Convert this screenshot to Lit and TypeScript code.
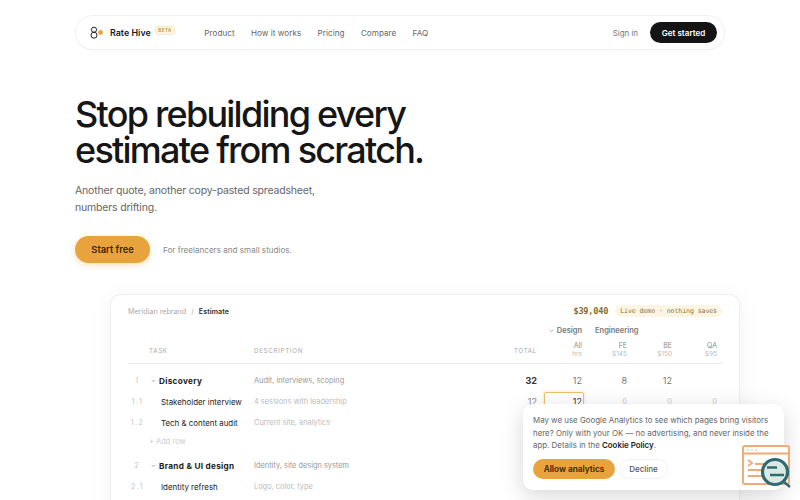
import { LitElement, html, css } from "lit";
import { customElement } from "lit/decorators.js";

type Row = { kind: "group" | "item" | "add"; n?: string; task?: string; desc?: string; total?: string; vals?: string[]; h: number };

const rows: Row[] = [
  { kind: "group", n: "1", task: "Discovery", desc: "Audit, interviews, scoping", total: "32", vals: ["12", "8", "12", ""], h: 21 },
  { kind: "item", n: "1.1", task: "Stakeholder interview", desc: "4 sessions with leadership", total: "12", vals: ["12", "0", "0", "0"], h: 21 },
  { kind: "item", n: "1.2", task: "Tech & content audit", desc: "Current site, analytics", total: "", vals: ["", "", "", ""], h: 21 },
  { kind: "add", task: "+ Add row", h: 22 },
  { kind: "group", n: "2", task: "Brand & UI design", desc: "Identity, site design system", total: "", vals: ["", "", "", ""], h: 21 },
  { kind: "item", n: "2.1", task: "Identity refresh", desc: "Logo, color, type", total: "", vals: ["", "", "", ""], h: 21 },
];

@customElement("app-root")
export class AppRoot extends LitElement {
  static styles = css`
    :host { display: block; width: 800px; height: 500px; overflow: hidden; position: relative; background: #fff;
      font-family: Inter, "Liberation Sans", sans-serif; color: #1a1a1a; }
    .page { padding: 15px 75px 0; }
    .nav { height: 35px; box-sizing: border-box; border: 1px solid #f1f1ef; border-radius: 18px; display: flex; align-items: center;
      padding: 0 7px 0 14px; box-shadow: 0 1px 3px rgba(0,0,0,.03); }
    .logo { width: 14px; height: 13px; display: block; }
    .brand { font-size: 8.8px; font-weight: 600; margin-left: 6px; letter-spacing: .05px; white-space: nowrap; }
    .beta { font-size: 4.6px; letter-spacing: .5px; color: #b98a30; background: #fdf6e8; border: 1px solid #f5e7cb; border-radius: 3px;
      padding: 1px 2.5px; margin-left: 4px; margin-top: -4px; font-weight: 500; }
    .links { display: flex; gap: 16.3px; margin-left: 29px; font-size: 8.1px; color: #666; letter-spacing: .05px; }
    .spacer { flex: 1; }
    .signin { font-size: 7.9px; color: #777; margin-right: 12px; }
    .cta { background: #141414; color: #fff; font-size: 8.1px; font-weight: 600; border-radius: 11px; height: 21px; width: 67px;
      display: flex; align-items: center; justify-content: center; }

    h1 { margin: 46px 0 0; font-size: 36px; line-height: 36px; font-weight: 500; letter-spacing: -1.75px; color: #161616; }
    .sub { margin: 14px 0 0; font-size: 10.5px; line-height: 17px; color: #666; letter-spacing: -.18px; }
    .actions { display: flex; align-items: center; margin-top: 20px; }
    .start { width: 75px; height: 27px; border-radius: 14px; background: #e8a33d; color: #3a2208; font-size: 9.3px; font-weight: 600;
      display: flex; align-items: center; justify-content: center; box-shadow: 0 2px 6px rgba(232,163,61,.35); }
    .note { margin-left: 13px; font-size: 8.1px; color: #888; }

    .card { margin: 31px -15px 0 35px; height: 260px; box-sizing: border-box; border: 1px solid #eeeeec; border-radius: 10px;
      padding: 10px 17px 0; background: #fff; box-shadow: 0 4px 24px rgba(0,0,0,.05); }
    .top { display: flex; align-items: center; height: 12px; font-size: 7.2px; color: #aaa; }
    .top .sep { margin: 0 5px; }
    .top b { color: #333; font-weight: 600; }
    .price { font-family: "DejaVu Sans Mono", monospace; font-size: 8.6px; font-weight: 700; color: #8a6a24; margin-right: 7px; letter-spacing: -.2px; }
    .live { font-family: "DejaVu Sans Mono", monospace; font-size: 6.6px; color: #8c7236; background: #fdf5e4; border-radius: 6px;
      padding: 2px 5px; letter-spacing: -.1px; }

    .grid { display: grid; grid-template-columns: 21px 105px 228px 55px 45px 45px 45px 45px; width: 594px; align-items: center; }
    .groups { height: 13px; margin-top: 7px; font-size: 7.5px; font-weight: 600; color: #777; }
    .groups .design { grid-column: 5; text-align: right; white-space: nowrap; }
    .groups .eng { grid-column: 6 / span 2; padding-left: 13px; white-space: nowrap; }
    .chev { display: inline-block; width: 8px; vertical-align: middle; margin-right: 0; }
    .chev svg { display: block; width: 5px; height: 4px; }
    .head { height: 26px; border-bottom: 1px solid #ececea; font-size: 6.2px; color: #aaa; letter-spacing: .7px; }
    .head .r { text-align: right; }
    .head .col { text-align: right; font-size: 7px; letter-spacing: 0; line-height: 9px; color: #888; }
    .head .col small { display: block; font-size: 6.5px; color: #bbb; }
    .body { margin-top: 6px; }
    .row { font-size: 8px; color: #999; }
    .row .n { font-size: 7px; color: #c4c4c4; text-align: center; letter-spacing: 1.5px; padding-right: 2px; white-space: nowrap; }
    .row .task { white-space: nowrap; overflow: hidden; color: #222; font-size: 7.9px; padding-left: 12px; }
    .row .num { text-align: right; }
    .row .zero { color: #ccc; font-size: 7.5px; }
    .row .d { color: #bbb; font-size: 7.4px; }
    .row .tot { text-align: right; color: #888; font-size: 9px; }
    .row.group .task { font-size: 8.2px; font-weight: 700; letter-spacing: .3px; padding-left: 2px; overflow: visible; }
    .row.group .d { color: #999; }
    .row.group .tot { font-weight: 700; color: #333; }
    .row.group .num { color: #777; font-size: 9px; }
    .add { color: #ccc; font-size: 7.5px; grid-column: 2 / span 2; }
    .sel { position: relative; color: #333; font-size: 9px; }
    .sel::before { content: ""; position: absolute; left: 7px; right: -2px; top: -4px; bottom: -8px; border: 1.5px solid #e8c06f; border-radius: 2px; box-shadow: 0 0 0 2px #fdf6e8; }

    .cookie { position: absolute; left: 523px; top: 404px; width: 261px; height: 86px; box-sizing: border-box; background: #fff; border-radius: 10px;
      padding: 10px 8px 9px 10px; box-shadow: 0 6px 22px rgba(0,0,0,.16); }
    .cookie p { margin: 0; font-size: 7.9px; line-height: 12.6px; color: #666; }
    .cookie p b { color: #222; font-weight: 600; }
    .btns { display: flex; gap: 4px; margin-top: 7px; align-items: center; }
    .allow { width: 82px; height: 20px; border-radius: 10px; background: #e8a33d; color: #3a2208; font-size: 8.3px; font-weight: 600;
      display: flex; align-items: center; justify-content: center; }
    .decline { width: 49px; height: 20px; border-radius: 10px; border: 1px solid #f2f2f0; color: #555; font-size: 8px; font-weight: 500;
      display: flex; align-items: center; justify-content: center; box-sizing: border-box; }
    .chat { position: absolute; left: 742px; top: 445px; width: 50px; height: 45px; }
  `;

  private chevron() {
    return html`<span class="chev"><svg viewBox="0 0 5 4" fill="none"><path d="M.8 1l1.7 1.7L4.2 1" stroke="#999" stroke-width=".8"/></svg></span>`;
  }

  private renderRow(r: Row) {
    if (r.kind === "add") {
      return html`<div class="grid row" style="height:${r.h - 6}px"><span></span><span class="add">${r.task}</span></div><div style="height:6px"></div>`;
    }
    return html`<div class="grid row ${r.kind}" style="height:${r.h}px">
      <span class="n">${r.n}</span>
      <span class="task">${r.kind === "group" ? this.chevron() : ""}${r.task}</span>
      <span class="d">${r.desc}</span>
      <span class="tot">${r.total}</span>
      ${r.vals!.map((v, i) => html`<span class="num ${v === "0" ? "zero" : ""} ${r.n === "1.1" && i === 0 ? "sel" : ""}">${v}</span>`)}
    </div>`;
  }

  render() {
    return html`
      <div class="page">
        <header class="nav">
          <svg class="logo" viewBox="0 0 14 13" fill="none">
            <circle cx="4" cy="3.7" r="2.6" stroke="#222" stroke-width="1"/>
            <circle cx="4" cy="9.2" r="3" stroke="#222" stroke-width="1"/>
            <circle cx="10.5" cy="6.5" r="2.4" fill="#e8a33d"/>
          </svg>
          <span class="brand">Rate Hive</span>
          <span class="beta">BETA</span>
          <nav class="links"><span>Product</span><span>How it works</span><span>Pricing</span><span>Compare</span><span>FAQ</span></nav>
          <span class="spacer"></span>
          <span class="signin">Sign in</span>
          <span class="cta">Get started</span>
        </header>

        <h1>Stop rebuilding every<br />estimate from scratch.</h1>
        <p class="sub">Another quote, another copy-pasted spreadsheet,<br />numbers drifting.</p>
        <div class="actions"><span class="start">Start free</span><span class="note">For freelancers and small studios.</span></div>

        <section class="card">
          <div class="top">
            <span>Meridian rebrand</span><span class="sep">/</span><b>Estimate</b>
            <span class="spacer"></span>
            <span class="price">$39,040</span><span class="live">Live demo · nothing saves</span>
          </div>
          <div class="grid groups">
            <span class="design">${this.chevron()}Design</span><span class="eng">Engineering</span>
          </div>
          <div class="grid head">
            <span></span><span>TASK</span><span>DESCRIPTION</span><span class="r">TOTAL</span>
            <span class="col">All<small>hrs</small></span>
            <span class="col">FE<small>$145</small></span>
            <span class="col">BE<small>$150</small></span>
            <span class="col">QA<small>$95</small></span>
          </div>
          <div class="body">${rows.map((r) => this.renderRow(r))}</div>
        </section>
      </div>

      <aside class="cookie">
        <p>May we use Google Analytics to see which pages bring visitors here? Only with your OK — no advertising, and never inside the app. Details in the <b>Cookie Policy</b>.</p>
        <div class="btns"><span class="allow">Allow analytics</span><span class="decline">Decline</span></div>
      </aside>

      <svg class="chat" viewBox="0 0 50 45" fill="none">
        <rect x="1" y="1" width="46" height="38" rx="2" fill="#fff" stroke="#efab78" stroke-width="2"/>
        <path d="M1 8.5H47" stroke="#efab78" stroke-width="2"/>
        <circle cx="6" cy="5" r=".8" fill="#efab78"/><circle cx="10" cy="5" r=".8" fill="#efab78"/><circle cx="14" cy="5" r=".8" fill="#efab78"/>
        <path d="M6 15l4 3-4 3M13 19H24M6 25H28M6 31H24" stroke="#efab78" stroke-width="2"/>
        <circle cx="33" cy="27" r="12.5" fill="#dbe9e6" stroke="#2f6b72" stroke-width="3.2"/>
        <path d="M25 22.5H35M28 30H42M41 36l7 6" stroke="#2f6b72" stroke-width="2.4"/>
      </svg>
    `;
  }
}
